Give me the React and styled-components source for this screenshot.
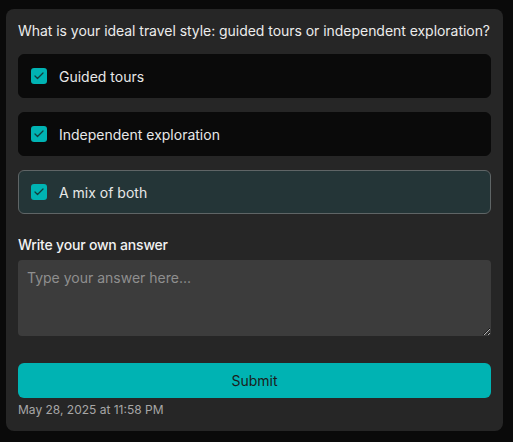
import React, { useState } from 'react'
import styled, { createGlobalStyle } from 'styled-components'

const GlobalStyle = createGlobalStyle`
  html, body {
    margin: 0;
    background: #0a0a0a;
    font-family: Inter, "Noto Sans", sans-serif;
  }
`

const Page = styled.div`
  padding: 9px 10px 11px 6px;
`

const Card = styled.div`
  background: #262626;
  border-radius: 8px;
  padding: 12px 12px 13px;
  display: flex;
  flex-direction: column;
`

const Question = styled.div`
  color: #ececec;
  font-size: 14px;
  line-height: 20px;
  letter-spacing: -0.04px;
  white-space: nowrap;
  margin-bottom: 13px;
`

const Options = styled.div`
  display: flex;
  flex-direction: column;
  gap: 14px;
`

const Option = styled.label`
  display: flex;
  align-items: center;
  gap: 12px;
  height: 44px;
  box-sizing: border-box;
  padding: 0 12px;
  border-radius: 6px;
  cursor: pointer;
  background: ${p => (p.$highlight ? '#243537' : '#0a0a0a')};
  border: 1px solid ${p => (p.$highlight ? '#5f6566' : '#0a0a0a')};
  color: #e8e8e8;
  font-size: 14px;
`

const Box = styled.span`
  width: 16px;
  height: 16px;
  border-radius: 3px;
  background: #00b3b3;
  display: flex;
  align-items: center;
  justify-content: center;
  flex-shrink: 0;
`

const Label = styled.div`
  color: #f2f2f2;
  font-size: 14px;
  font-weight: 500;
  letter-spacing: -0.2px;
  line-height: 20px;
  margin: 21px 0 5px;
`

const Answer = styled.textarea`
  height: 76px;
  box-sizing: border-box;
  background: #3c3c3c;
  border: none;
  border-radius: 4px;
  padding: 8px 9px;
  color: #e8e8e8;
  font-family: inherit;
  font-size: 14px;
  line-height: 20px;
  outline: none;
  &::placeholder {
    color: #8f8f8f;
  }
`

const Submit = styled.button`
  margin-top: 27px;
  height: 35px;
  border: none;
  border-radius: 6px;
  background: #00b3b3;
  color: #1c1c1c;
  font-family: inherit;
  font-size: 14px;
  cursor: pointer;
`

const Stamp = styled.div`
  margin-top: 4px;
  color: #a6a6a6;
  font-size: 12px;
  line-height: 16px;
`

const Tick = () => (
  <svg width="12" height="12" viewBox="0 0 24 24" fill="none" stroke="#123c3c" strokeWidth="2.5" strokeLinecap="round" strokeLinejoin="round">
    <path d="M20 6 9 17l-5-5" />
  </svg>
)

const choices = ['Guided tours', 'Independent exploration', 'A mix of both']

export default function App() {
  const [text, setText] = useState('')
  return (
    <Page>
      <GlobalStyle />
      <Card>
        <Question>What is your ideal travel style: guided tours or independent exploration?</Question>
        <Options>
          {choices.map((c, i) => (
            <Option key={c} $highlight={i === 2}>
              <Box><Tick /></Box>
              {c}
            </Option>
          ))}
        </Options>
        <Label>Write your own answer</Label>
        <Answer placeholder="Type your answer here..." value={text} onChange={e => setText(e.target.value)} />
        <Submit>Submit</Submit>
        <Stamp>May 28, 2025 at 11:58 PM</Stamp>
      </Card>
    </Page>
  )
}
